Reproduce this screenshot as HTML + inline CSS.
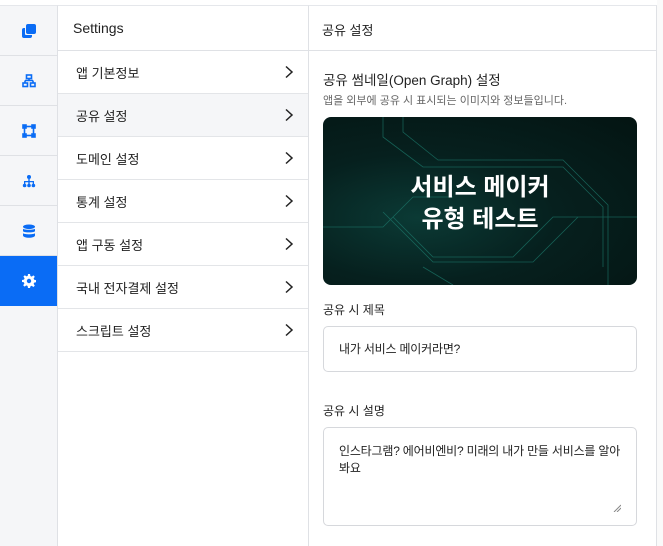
<!DOCTYPE html>
<html><head><meta charset="utf-8"><style>
*{box-sizing:border-box;margin:0;padding:0}
body{width:663px;height:546px;overflow:hidden;background:#fff;font-family:"Liberation Sans","Noto Sans CJK KR",sans-serif;color:#222;position:relative}
.side{position:absolute;left:0;top:5px;width:58px;height:541px;background:#f5f6f8;border-right:1px solid #dfe1e5;border-top:1px solid #e5e7eb}
.si{height:50px;border-bottom:1px solid #dfe1e5;display:flex;align-items:center;justify-content:center}
.si.act{background:#0a6cf5;border-bottom:none}
.mid{position:absolute;left:58px;top:5px;width:251px;height:541px;border-right:1px solid #dfe1e5;border-top:1px solid #e5e7eb}
.mh{height:45px;border-bottom:1px solid #dfe1e5;padding:14px 15px;font-size:14px;color:#222}
.row{height:43px;border-bottom:1px solid #e3e5e8;display:flex;align-items:center;justify-content:space-between;padding:0 14px 0 18px;font-size:13px;color:#222}
.row.sel{background:#f5f6f8}
.right{position:absolute;left:309px;top:5px;width:348px;height:541px;border-right:1px solid #dfe1e5;border-top:1px solid #e5e7eb}
.rh{height:45px;border-bottom:1px solid #dfe1e5;padding:14px 13px;font-size:13px}
.beyond{position:absolute;left:657px;top:0;width:6px;height:546px;background:#fafafa}
.t1{position:absolute;left:14px;top:63px;font-size:13.5px}
.t2{position:absolute;left:14px;top:86px;font-size:11px;color:#666}
.img{position:absolute;left:14px;top:111px;width:314px;height:168px;border-radius:8px;overflow:hidden;background:radial-gradient(ellipse at 30% 60%,#0b3a35 0%,#06201e 45%,#041412 100%)}
.img .tx{position:absolute;left:0;right:0;top:55px;text-align:center;color:#fff;font-weight:bold;font-size:24px;line-height:32px}
.lab{position:absolute;left:14px;font-size:12px}
.inp{position:absolute;left:14px;width:314px;border:1px solid #d6d8dc;border-radius:5px;font-size:12px;padding:0 15px;white-space:nowrap;letter-spacing:-0.2px}
</style></head><body>
<div class="side">
 <div class="si"><svg width="16" height="16" viewBox="0 0 16 16"><rect x="5" y="1" width="10" height="10" rx="2" fill="#0a6cf5"/><path d="M3 5h1v6a1 1 0 0 0 1 1h6v1a2 2 0 0 1-2 2H3a2 2 0 0 1-2-2V7a2 2 0 0 1 2-2z" fill="#0a6cf5"/></svg></div>
 <div class="si"><svg width="14" height="14" viewBox="0 0 14 14" fill="none" stroke="#0a6cf5" stroke-width="1.6"><rect x="4.5" y="1" width="5" height="3.5"/><path d="M7 4.5v2M3 6.5h8M3 6.5v2M11 6.5v2"/><rect x="1" y="9" width="4.5" height="3.5"/><rect x="8.5" y="9" width="4.5" height="3.5"/></svg></div>
 <div class="si"><svg width="14" height="14" viewBox="0 0 14 14" fill="none" stroke="#0a6cf5" stroke-width="1.6"><rect x="2.5" y="2.5" width="9" height="9"/><rect x="1" y="1" width="3" height="3" fill="#0a6cf5"/><rect x="10" y="1" width="3" height="3" fill="#0a6cf5"/><rect x="1" y="10" width="3" height="3" fill="#0a6cf5"/><rect x="10" y="10" width="3" height="3" fill="#0a6cf5"/></svg></div>
 <div class="si"><svg width="14" height="14" viewBox="0 0 14 14" fill="#0a6cf5"><circle cx="7" cy="3" r="2"/><path d="M6.3 5h1.4v2H12v3h-1.3V8.3H7.7V10H6.3V8.3H3.3V10H2V7h4.3z"/><circle cx="2.6" cy="11.5" r="1.8"/><circle cx="7" cy="11.5" r="1.8"/><circle cx="11.4" cy="11.5" r="1.8"/></svg></div>
 <div class="si"><svg width="14" height="14" viewBox="0 0 14 14" fill="#0a6cf5"><ellipse cx="7" cy="2.8" rx="6" ry="2.3"/><path d="M1 4.8c1.5 1.4 10.5 1.4 12 0v2.4c-1.5 1.6-10.5 1.6-12 0z"/><path d="M1 9.3c1.5 1.4 10.5 1.4 12 0v2.2c0 1.3-2.7 2.3-6 2.3s-6-1-6-2.3z"/></svg></div>
 <div class="si act"><svg width="14" height="14" viewBox="0 0 14 14"><path fill="#fff" d="M6 0h2l.4 2 1.3.6 1.7-1.2 1.4 1.4-1.2 1.7.6 1.3 2 .4v2l-2 .4-.6 1.3 1.2 1.7-1.4 1.4-1.7-1.2-1.3.6L8 14H6l-.4-2-1.3-.6-1.7 1.2-1.4-1.4 1.2-1.7L1.8 8.2 0 8V6l2-.4.6-1.3L1.4 2.6 2.8 1.2l1.7 1.2 1.3-.6z"/><circle cx="7" cy="7" r="2.2" fill="#0a6cf5"/></svg></div>
</div>
<div class="mid">
 <div class="mh">Settings</div>
 <div class="row"><span>앱 기본정보</span><svg width="10" height="14" viewBox="0 0 10 14"><path d="M2 1.5l6 5.5-6 5.5" fill="none" stroke="#222" stroke-width="1.5"/></svg></div>
 <div class="row sel"><span>공유 설정</span><svg width="10" height="14" viewBox="0 0 10 14"><path d="M2 1.5l6 5.5-6 5.5" fill="none" stroke="#222" stroke-width="1.5"/></svg></div>
 <div class="row"><span>도메인 설정</span><svg width="10" height="14" viewBox="0 0 10 14"><path d="M2 1.5l6 5.5-6 5.5" fill="none" stroke="#222" stroke-width="1.5"/></svg></div>
 <div class="row"><span>통계 설정</span><svg width="10" height="14" viewBox="0 0 10 14"><path d="M2 1.5l6 5.5-6 5.5" fill="none" stroke="#222" stroke-width="1.5"/></svg></div>
 <div class="row"><span>앱 구동 설정</span><svg width="10" height="14" viewBox="0 0 10 14"><path d="M2 1.5l6 5.5-6 5.5" fill="none" stroke="#222" stroke-width="1.5"/></svg></div>
 <div class="row"><span>국내 전자결제 설정</span><svg width="10" height="14" viewBox="0 0 10 14"><path d="M2 1.5l6 5.5-6 5.5" fill="none" stroke="#222" stroke-width="1.5"/></svg></div>
 <div class="row"><span>스크립트 설정</span><svg width="10" height="14" viewBox="0 0 10 14"><path d="M2 1.5l6 5.5-6 5.5" fill="none" stroke="#222" stroke-width="1.5"/></svg></div>
</div>
<div class="right">
 <div class="rh">공유 설정</div>
 <div class="t1">공유 썸네일(Open Graph) 설정</div>
 <div class="t2">앱을 외부에 공유 시 표시되는 이미지와 정보들입니다.</div>
 <div class="img">
  <svg width="314" height="168" style="position:absolute;left:0;top:0" fill="none" stroke="#1c7a6c" stroke-width="0.8" opacity="0.7">
   <path d="M60 0v20l40 30h140l40 40v60"/><path d="M80 0v15l35 28h125l45 45v80"/><path d="M0 110h60l30-30h40"/><path d="M70 100l40 40h80l40-40h84"/><path d="M60 95l50 50h100l45-45"/><path d="M100 150l30 18"/>
  </svg>
  <div class="tx">서비스 메이커<br>유형 테스트</div>
 </div>
 <div class="lab" style="top:295px">공유 시 제목</div>
 <div class="inp" style="top:320px;height:46px;line-height:44px">내가 서비스 메이커라면?</div>
 <div class="lab" style="top:396px">공유 시 설명</div>
 <div class="inp" style="top:421px;height:99px;padding-top:15px;line-height:17px">인스타그램? 에어비엔비? 미래의 내가 만들 서비스를 알아<br>봐요<svg width="8" height="8" style="position:absolute;right:15px;bottom:13px" stroke="#888" stroke-width="1"><path d="M1 8L8 1M4 8L8 4"/></svg></div>
</div>
<div class="beyond"></div>
</body></html>
